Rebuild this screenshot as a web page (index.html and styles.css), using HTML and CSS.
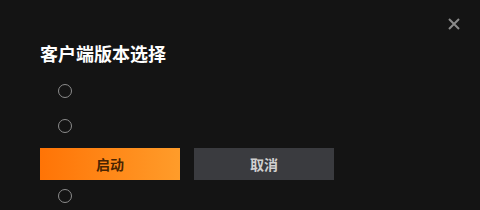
FILE: index.html
```html
<!DOCTYPE html>
<html lang="zh-CN">
<head>
    <meta charset="UTF-8">
    <title>客户端版本选择</title>
    <link rel="stylesheet" href="styles.css">
</head>
<body>
    <div class="dialog">
        <button class="close" type="button">
            <svg width="12" height="12" viewBox="0 0 12 12">
                <path d="M1 1L11 11M11 1L1 11" stroke="#8a8a8a" stroke-width="2"/>
            </svg>
        </button>

        <h2 class="title">客户端版本选择</h2>

        <ul class="versions">
            <li><span class="radio"></span></li>
            <li><span class="radio"></span></li>
            <li><span class="radio"></span></li>
            <li><span class="radio"></span></li>
        </ul>

        <div class="actions">
            <button class="btn btn-start" type="button">启动</button>
            <button class="btn btn-cancel" type="button">取消</button>
        </div>
    </div>
</body>
</html>
```

FILE: styles.css
```css
html, body {
    margin: 0;
    height: 100%;
    overflow: hidden;
    background: #141414;
    font-family: "Noto Sans CJK SC", "Noto Sans", sans-serif;
}

.dialog {
    position: relative;
    height: 210px;
    padding: 38px 40px 0;
    box-sizing: border-box;
    overflow: hidden;
}

.close {
    position: absolute;
    top: 18px;
    right: 20px;
    width: 12px;
    height: 12px;
    padding: 0;
    border: none;
    background: none;
    display: flex;
}

.title {
    margin: 0;
    font-size: 18px;
    line-height: 30px;
    font-weight: 700;
    color: #ffffff;
}

.versions {
    list-style: none;
    margin: 5px 0 0;
    padding: 0 0 0 18px;
}

.versions li {
    height: 35px;
    display: flex;
    align-items: center;
}

.radio {
    width: 12px;
    height: 12px;
    border: 1px solid #8c8c8c;
    border-radius: 50%;
}

.actions {
    position: absolute;
    left: 40px;
    top: 148px;
    display: flex;
    gap: 14px;
}

.btn {
    width: 140px;
    height: 32px;
    border: none;
    padding: 0;
    font-family: inherit;
    font-size: 14px;
    font-weight: 700;
}

.btn-start {
    background: linear-gradient(90deg, #ff7406, #ff9c2a);
    color: #4a2402;
}

.btn-cancel {
    background: #3a3b3f;
    color: #d0d0d0;
}
```
